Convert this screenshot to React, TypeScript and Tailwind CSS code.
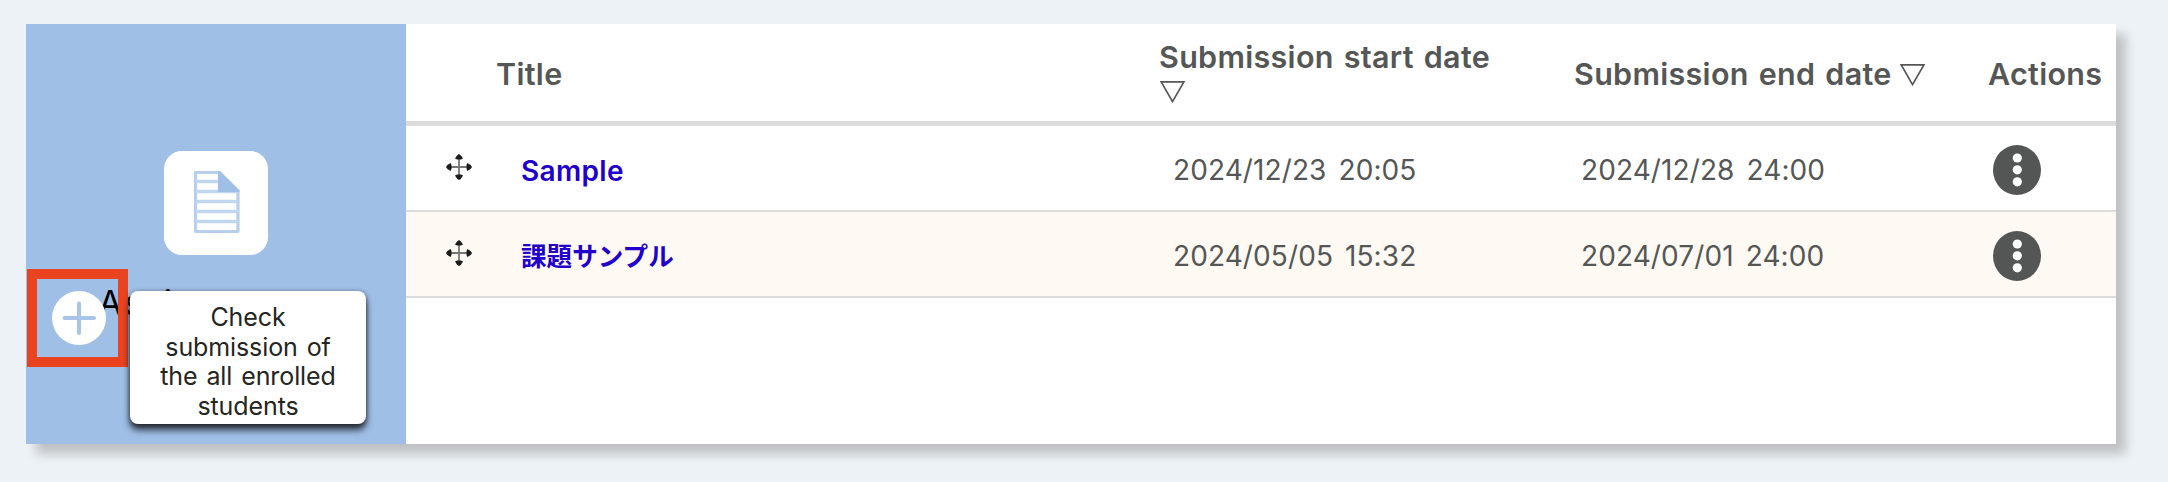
const rows = [
  { title: "Sample", start: "2024/12/23 20:05", end: "2024/12/28 24:00", tint: false, size: "text-[28px] tracking-[0.35px]" },
  { title: "課題サンプル", start: "2024/05/05 15:32", end: "2024/07/01 24:00", tint: true, size: "text-[25.600px]" },
];

const headText =
  "font-['Inter','Noto_Sans_CJK_JP',sans-serif] text-[30.500px] font-semibold leading-[34px] tracking-[0.3px] [word-spacing:2px] whitespace-nowrap text-[#555756]";
const dateText =
  "font-['Inter','Noto_Sans_CJK_JP',sans-serif] text-[28px] leading-[34px] tracking-[0.1px] [word-spacing:4px] whitespace-nowrap text-[#555756]";

function SortMark() {
  return (
    <svg className="block h-[24px] w-[27px]" viewBox="0 0 27 24" fill="none" stroke="#555756" strokeWidth="1.7">
      <path d="M2.200 1.9H24.900L13.500 21.600Z" />
    </svg>
  );
}

function MoveIcon() {
  return (
    <svg className="block h-[26px] w-[26px]" viewBox="0 0 26 26">
      <path d="M13 3V23M3 13H23" stroke="#777" strokeWidth="1.8" />
      <path
        d="M13 0Q15 0.500 17 4.600L15 5.500H11L9 4.600Q11 0.500 13 0ZM13 26Q15 25.500 17 21.400L15 20.500H11L9 21.400Q11 25.500 13 26ZM0 13Q0.500 11 4.600 9L5.500 11V15L4.600 17Q0.500 15 0 13ZM26 13Q25.500 11 21.400 9L20.500 11V15L21.400 17Q25.500 15 26 13Z"
        fill="#1c1c1c"
      />
    </svg>
  );
}

function MoreIcon() {
  return (
    <svg className="block h-[50px] w-[48px]" viewBox="0 0 48 50">
      <ellipse cx="24" cy="25" rx="24" ry="25" fill="#535655" />
      <circle cx="24.3" cy="13" r="4.6" fill="#fff" />
      <circle cx="24.3" cy="24.8" r="4.6" fill="#fff" />
      <circle cx="24.3" cy="36.8" r="4.6" fill="#fff" />
    </svg>
  );
}

function DocumentIcon() {
  return (
    <svg className="block h-[104px] w-[104px]" viewBox="0 0 104 104">
      <rect width="104" height="104" rx="18" fill="#fff" />
      <path
        d="M31.5 21.5H55L74 40V79.5Q74 80.5 73 80.5H32.5Q31.5 80.5 31.5 79.5Z"
        fill="none"
        stroke="#b7cfec"
        strokeWidth="3.2"
      />
      <path d="M32 30.5H54M32 40.5H74M32 50.5H74M32 60.5H74M32 70.5H74" stroke="#c1d6ef" strokeWidth="3.6" />
      <path d="M54 20H56L75.500 39.500V41H54Z" fill="#a0bfe7" />
    </svg>
  );
}

function PlusIcon() {
  return (
    <svg className="block h-[54px] w-[54px]" viewBox="0 0 54 54">
      <circle cx="27" cy="27" r="27" fill="#fff" />
      <path d="M27 12.500V42M12.500 27H42" stroke="#a8c5e9" strokeWidth="4" strokeLinecap="round" />
    </svg>
  );
}

export default function App() {
  return (
    <div className="h-[482px] w-[2168px] overflow-hidden bg-[#edf2f6] pt-[24px] pl-[26px]">
      <div className="flex h-[420px] w-[2090px] bg-white shadow-[10px_10px_10px_rgba(0,0,0,0.2)]">
        <aside className="relative flex w-[380px] shrink-0 flex-col items-center bg-[#a0bfe7] pt-[127px]">
          <DocumentIcon />
          <div className="mt-[26px] mr-[6px] font-['Inter','Noto_Sans_CJK_JP',sans-serif] text-[34px] leading-[44px] tracking-[2px] text-black">
            Assignments
          </div>
          <div className="absolute top-[267px] left-[26px]">
            <PlusIcon />
          </div>
          <div className="absolute top-[245px] left-[1px] h-[98px] w-[101px] border-[10px] border-[#ea431f]" />
          <div className="absolute top-[267px] left-[104px] h-[133px] w-[236px] rounded-[8px] bg-white pt-[12px] text-center font-['Inter','Noto_Sans_CJK_JP',sans-serif] text-[25px] leading-[29.600px] tracking-[-0.1px] [word-spacing:2px] text-[#252521] shadow-[0_6px_7px_rgba(0,0,0,0.7),0_1px_5px_rgba(0,0,0,0.5)]">
            Check
            <br />
            submission of
            <br />
            the all enrolled
            <br />
            students
          </div>
        </aside>
        <main className="flex-1">
          <header className="flex h-[102px] border-b-[5px] border-[#dcdcdc] pl-[90px]">
            <div className={`w-[663px] pt-[33px] ${headText}`}>Title</div>
            <div className="w-[415px] pt-[16px]">
              <div className={headText}>Submission start date</div>
              <div className="pt-[6px]">
                <SortMark />
              </div>
            </div>
            <div className="flex w-[414px] pt-[33px]">
              <div className={`w-[325px] ${headText}`}>Submission end date</div>
              <div className="pt-[6px]">
                <SortMark />
              </div>
            </div>
            <div className={`pt-[33px] ${headText}`}>Actions</div>
          </header>
          {rows.map((row) => (
            <div
              key={row.title}
              className={`flex h-[86px] border-b-2 border-[#dcdcdc] pl-[40px] ${row.tint ? "bg-[#fef9f3]" : "bg-white"}`}
            >
              <div className="w-[75px] pt-[28px]">
                <MoveIcon />
              </div>
              <div
                className={`w-[652px] pt-[28px] font-['Inter','Noto_Sans_CJK_JP',sans-serif] leading-[34px] font-semibold text-[#2200cc] ${row.size}`}
              >
                {row.title}
              </div>
              <div className={`w-[408px] pt-[27px] ${dateText}`}>{row.start}</div>
              <div className={`w-[412px] pt-[27px] ${dateText}`}>{row.end}</div>
              <div className="pt-[19px]">
                <MoreIcon />
              </div>
            </div>
          ))}
        </main>
      </div>
    </div>
  );
}
